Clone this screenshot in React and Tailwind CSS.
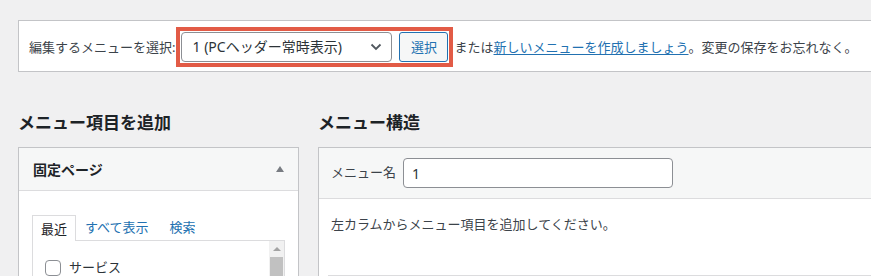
import React from "react";

const FONT = {
  fontFamily: '"Noto Sans", "Noto Sans CJK JP", sans-serif',
};

const Chevron = () => (
  <svg width="12" height="8" viewBox="0 0 12 8" className="shrink-0">
    <polyline
      points="1.5,1.5 6,6 10.5,1.5"
      fill="none"
      stroke="#50575e"
      strokeWidth="1.8"
    />
  </svg>
);

const MenuPicker = () => (
  <div className="flex items-center pl-[10px] pt-[6px] pb-[4px] text-[13px] leading-[20px] text-[#3c434a] whitespace-nowrap">
    <span className="mr-[1px]">編集するメニューを選択:</span>
    <div className="flex items-center gap-[7px] border-4 border-[#e25b46] p-[1px]">
      <div className="flex h-[30px] w-[211px] items-center justify-between rounded-[4px] border border-[#8c8f94] bg-white pl-[10px] pr-[9px] text-[14px] text-[#2c3338]">
        <span>1 (PCヘッダー常時表示)</span>
        <Chevron />
      </div>
      <button className="flex h-[30px] w-[49px] items-center justify-center rounded-[3px] border border-[#2271b1] bg-[#f6f7f7] text-[13px] text-[#2271b1]">
        選択
      </button>
    </div>
    <span className="ml-[1px]">または</span>
    <a className="text-[#2271b1] underline underline-offset-2">
      新しいメニューを作成しましょう
    </a>
    <span>。変更の保存をお忘れなく。</span>
  </div>
);

const PagesBox = () => (
  <div className="border border-[#c3c4c7] bg-white">
    <div className="flex h-[43px] items-center justify-between border-b border-[#dcdcde] bg-[#f6f7f7] pl-[14px] pr-[14px]">
      <span className="text-[14px] font-semibold text-[#1d2327]">固定ページ</span>
      <span className="h-0 w-0 border-x-[4px] border-b-[6px] border-x-transparent border-b-[#787c82]" />
    </div>
    <div className="pl-[13px] pr-[13px] pt-[24px]">
      <div className="flex items-end text-[13px] leading-[20px]">
        <div className="relative z-10 -mb-px flex h-[26px] items-center border-x border-t border-[#dcdcde] bg-white px-[8px] text-[#1d2327]">
          最近
        </div>
        <a className="ml-[9px] pb-[3px] text-[#2271b1]">すべて表示</a>
        <a className="ml-[21px] pb-[3px] text-[#2271b1]">検索</a>
      </div>
      <div className="flex h-[120px] border border-[#dcdcde] bg-white">
        <div className="flex flex-1 items-start pl-[12px] pt-[17px]">
          <label className="flex items-center text-[13px] text-[#2c3338]">
            <span className="h-[16px] w-[16px] rounded-[4px] border border-[#8c8f94] bg-white" />
            <span className="ml-[8px]">サービス</span>
          </label>
        </div>
        <div className="flex w-[15px] flex-col items-center bg-[#f1f1f1]">
          <div className="flex h-[16px] items-center justify-center">
            <span className="h-0 w-0 border-x-[4px] border-b-[4px] border-x-transparent border-b-[#a3a3a3]" />
          </div>
          <div className="w-[13px] flex-1 bg-[#c1c1c1]" />
        </div>
      </div>
    </div>
  </div>
);

const StructureBox = () => (
  <div className="w-[600px] border-l border-t border-[#c3c4c7] bg-white">
    <div className="flex h-[51px] items-center border-b border-[#dcdcde] bg-[#f6f7f7] pl-[12px]">
      <span className="text-[13px] text-[#3c434a]">メニュー名</span>
      <div className="ml-[7px] flex h-[30px] w-[270px] items-center rounded-[4px] border border-[#8c8f94] bg-white pl-[8px] text-[14px] text-[#2c3338]">
        1
      </div>
    </div>
    <div className="pl-[9px] pt-[15px]">
      <p className="pl-[3px] text-[13px] leading-[20px] text-[#3c434a]">
        左カラムからメニュー項目を追加してください。
      </p>
      <div className="mt-[41px] h-[20px] border-t border-[#dcdcde]" />
    </div>
  </div>
);

const App = () => {
  return (
    <div
      className="h-[276px] overflow-hidden bg-[#f0f0f1] pl-[18px] pt-[20px]"
      style={FONT}
    >
      <div className="w-[900px] border border-[#c3c4c7] bg-white">
        <MenuPicker />
      </div>
      <div className="mt-[40px] flex gap-[19px]">
        <div className="w-[281px] shrink-0">
          <h2 className="mb-[13px] text-[17px] font-semibold leading-[22px] text-[#1d2327]">
            メニュー項目を追加
          </h2>
          <PagesBox />
        </div>
        <div className="shrink-0">
          <h2 className="mb-[13px] text-[17px] font-semibold leading-[22px] text-[#1d2327]">
            メニュー構造
          </h2>
          <StructureBox />
        </div>
      </div>
    </div>
  );
};

export default App;
